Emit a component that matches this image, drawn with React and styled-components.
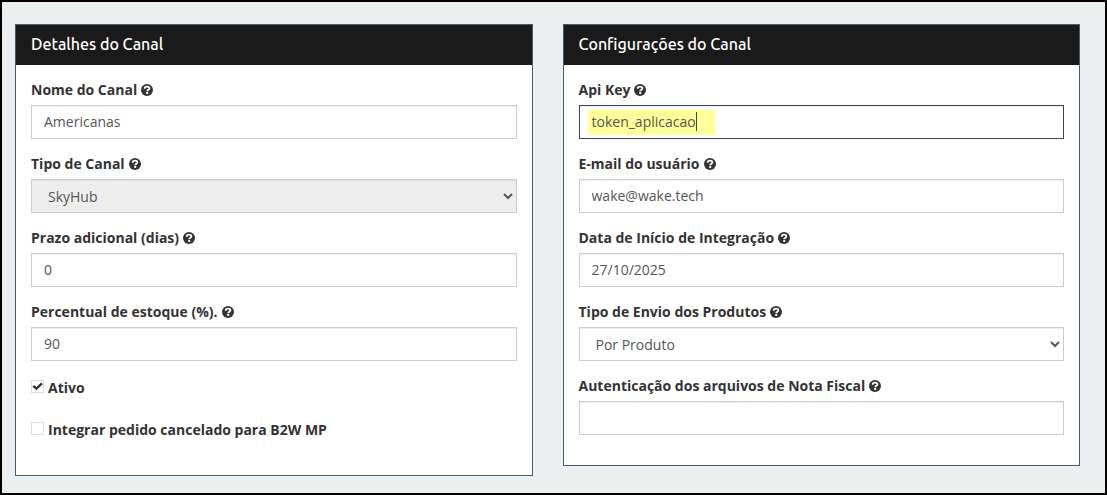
import React, { useId } from "react";
import styled, { createGlobalStyle, css } from "styled-components";

const GlobalStyle = createGlobalStyle`
  *, *::before, *::after { box-sizing: border-box; }
  body {
    margin: 0;
    background: #ebeff0;
    color: #333;
    font: 14px/20px "Open Sans", "Noto Sans", sans-serif;
  }
`;

const Page = styled.main`
  min-height: 100vh;
  border: 2px solid #000;
  padding: 22px 25px 17px 13px;
  display: grid;
  grid-template-columns: 1fr 1fr;
  gap: 30px;
  align-items: start;
`;

const Panel = styled.section`
  min-width: 0;
  border: 1px solid #475c70;
  background: #fff;
`;

const PanelTitle = styled.h2`
  margin: 0;
  padding: 9px 15px 11px;
  background: #1a1a1a;
  color: #fff;
  font-family: Ubuntu, "Noto Sans", "Open Sans", sans-serif;
  font-size: 16px;
  font-weight: 500;
  line-height: 20px;
`;

const PanelBody = styled.div`
  padding: 15px;
`;

const Field = styled.div`
  margin-bottom: 15px;
`;

const Label = styled.label`
  display: flex;
  align-items: center;
  gap: 4px;
  margin-bottom: 5px;
  font-weight: 700;
`;

const controlStyle = css`
  display: block;
  width: 100%;
  height: 34px;
  padding: 6px 12px;
  border: 1px solid #ccc;
  border-radius: 0;
  background-color: #fff;
  box-shadow: inset 0 1px 1px rgba(0, 0, 0, 0.075);
  color: #555;
  font: inherit;
  outline: none;
`;

const Input = styled.input`
  ${controlStyle}
  padding: 5px 12px 7px;
  ${(p) =>
    p.$active &&
    css`
      border-color: #34495e;
      background-image: linear-gradient(#444, #444), linear-gradient(#ffff99, #ffff99);
      background-repeat: no-repeat;
      background-size: 1px 19px, 127px 25px;
      background-position: 116px 6px, 8px 4px;
    `}
`;

const Select = styled.select`
  ${controlStyle}
  &:disabled {
    background-color: #eee;
    color: #555;
    opacity: 1;
  }
`;

const CheckRow = styled.div`
  display: flex;
  gap: 4px;
  margin-bottom: 15px;
  padding: 2px 0 5px;

  label { font-weight: 700; }
`;

const Checkbox = styled.input`
  appearance: none;
  width: 13px;
  height: 13px;
  margin: 2px 0 0;
  border: 1px solid #ddd;
  background: #fff;
  display: grid;
  place-items: center;

  &:checked::before {
    content: "";
    width: 11px;
    height: 9px;
    background: #333;
    clip-path: polygon(4% 52%, 20% 34%, 40% 56%, 82% 6%, 98% 24%, 40% 92%);
  }
`;

function HelpIcon() {
  return (
    <svg width="12" height="12" viewBox="0 0 12 12" aria-hidden="true">
      <circle cx="6" cy="6" r="6" fill="#333" />
      <path
        d="M3.7 4.7C3.7 3.1 4.7 2.6 6 2.6S8.4 3.3 8.4 4.5C8.4 5.8 6.2 5.7 6.2 7.3"
        fill="none"
        stroke="#fff"
        strokeWidth="1.8"
      />
      <rect x="5.2" y="8" width="2" height="1.9" fill="#fff" />
    </svg>
  );
}

function FormField({ label, options, ...rest }) {
  const id = useId();
  return (
    <Field>
      <Label htmlFor={id}>
        {label}
        <HelpIcon />
      </Label>
      {options ? (
        <Select id={id} {...rest}>
          {options.map((o) => (
            <option key={o}>{o}</option>
          ))}
        </Select>
      ) : (
        <Input id={id} type="text" {...rest} />
      )}
    </Field>
  );
}

function CheckField({ label, ...rest }) {
  const id = useId();
  return (
    <CheckRow>
      <Checkbox id={id} type="checkbox" {...rest} />
      <label htmlFor={id}>{label}</label>
    </CheckRow>
  );
}

export default function App() {
  return (
    <>
      <GlobalStyle />
      <Page>
        <Panel>
          <PanelTitle>Detalhes do Canal</PanelTitle>
          <PanelBody>
            <FormField label="Nome do Canal" defaultValue="Americanas" />
            <FormField label="Tipo de Canal" options={["SkyHub"]} disabled />
            <FormField label="Prazo adicional (dias)" defaultValue="0" />
            <FormField label="Percentual de estoque (%)." defaultValue="90" />
            <CheckField label="Ativo" defaultChecked />
            <CheckField label="Integrar pedido cancelado para B2W MP" />
          </PanelBody>
        </Panel>
        <Panel>
          <PanelTitle>Configurações do Canal</PanelTitle>
          <PanelBody>
            <FormField label="Api Key" defaultValue="token_aplicacao" $active />
            <FormField label="E-mail do usuário" defaultValue="wake@wake.tech" />
            <FormField label="Data de Início de Integração" defaultValue="27/10/2025" />
            <FormField label="Tipo de Envio dos Produtos" options={["Por Produto"]} />
            <FormField label="Autenticação dos arquivos de Nota Fiscal" />
          </PanelBody>
        </Panel>
      </Page>
    </>
  );
}
